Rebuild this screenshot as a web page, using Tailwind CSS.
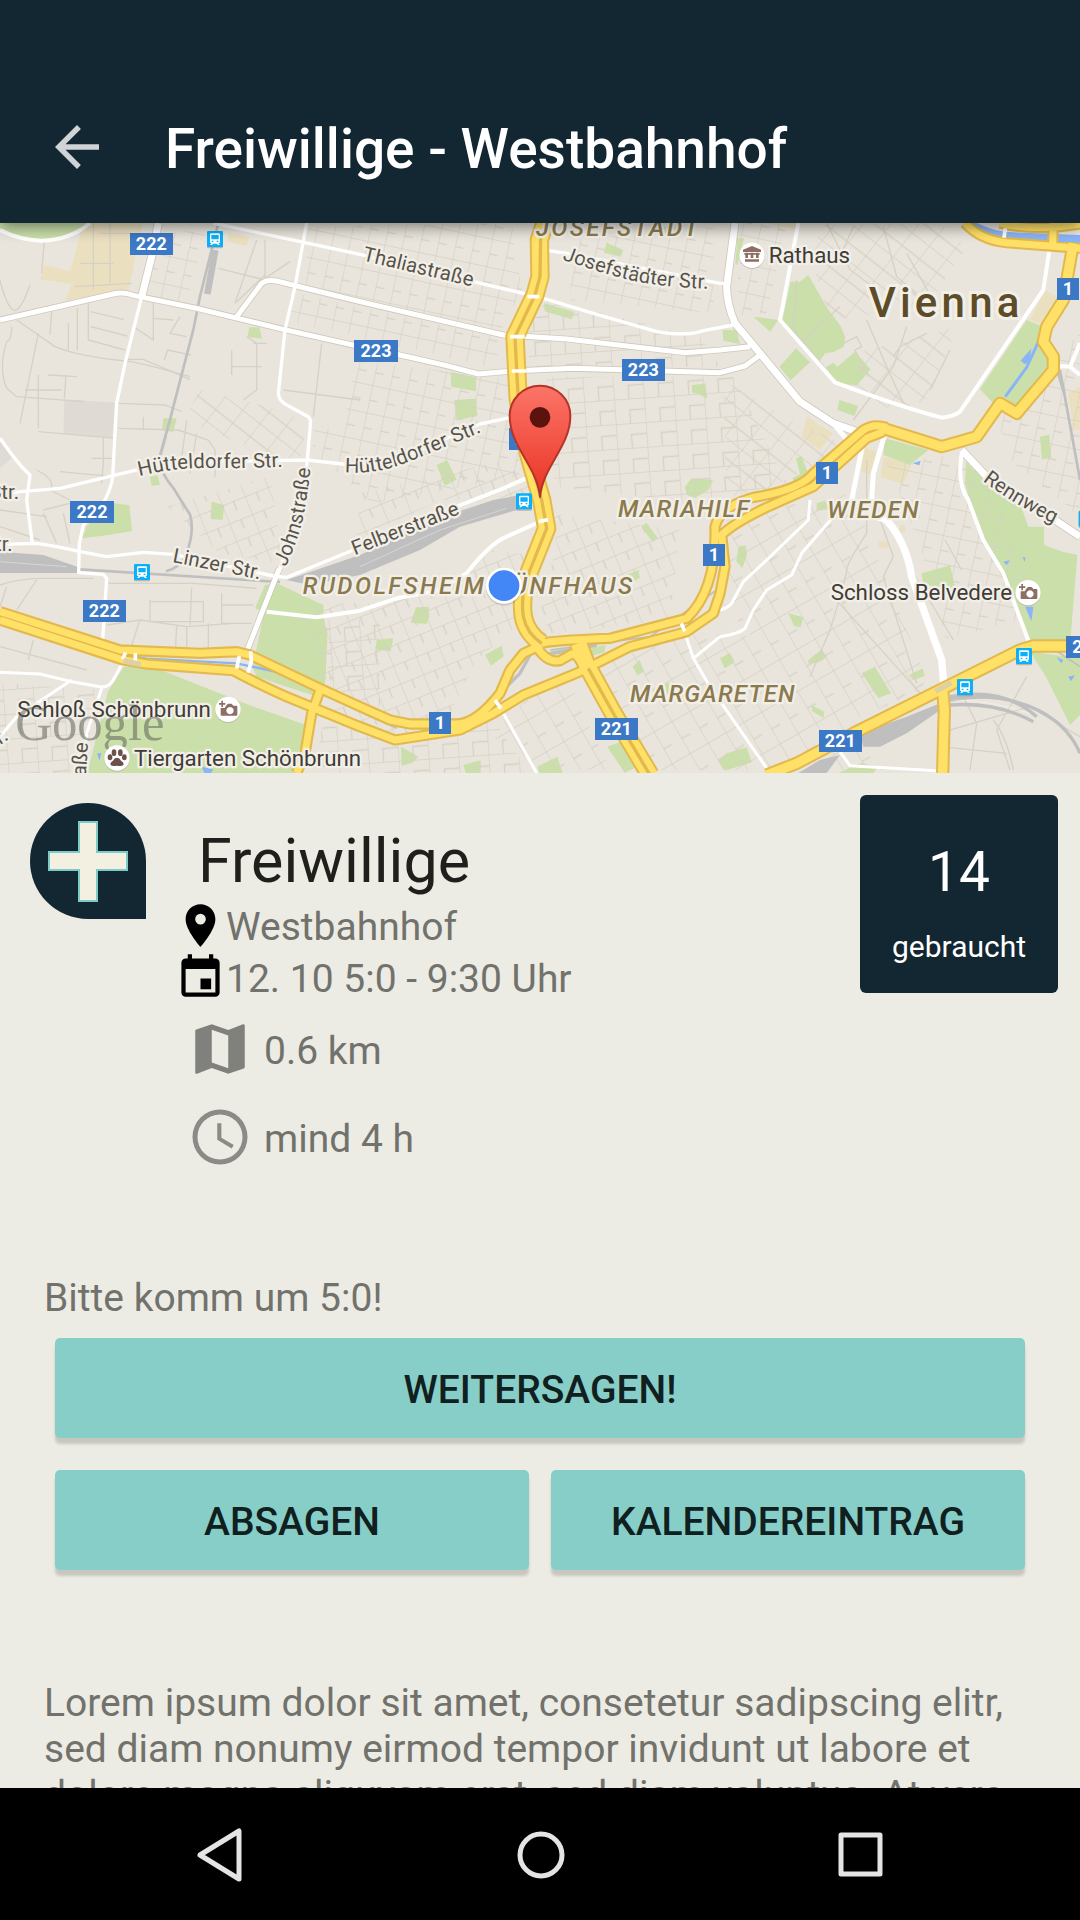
<!DOCTYPE html>
<html lang="de">
<head>
<meta charset="utf-8">
<meta name="viewport" content="width=device-width, initial-scale=1">
<title>Freiwillige - Westbahnhof</title>
<script src="https://cdn.jsdelivr.net/npm/@tailwindcss/browser@4"></script>
</head>
<body class="flex h-screen flex-col overflow-hidden bg-[#edece4] font-['Roboto',sans-serif] text-[39px] leading-[46px] text-[#72726d]">

<header class="relative z-10 flex h-[223px] shrink-0 items-center bg-[#122732] pt-[70px] shadow-[0_4px_14px_rgba(0,0,0,0.45)]">
  <button type="button" aria-label="Zurück" class="ml-[41px] flex size-[72px] items-center justify-center">
    <svg class="size-[66px]" viewBox="0 0 24 24" fill="#d0d4d6" aria-hidden="true"><path d="M20 11H7.830l5.590-5.590L12 4l-8 8 8 8 1.410-1.410L7.830 13H20v-2z"/></svg>
  </button>
  <h1 class="ml-[52px] pt-[4px] text-[55px] leading-[64px] font-medium text-white">Freiwillige - Westbahnhof</h1>
</header>

<section aria-label="Karte" class="h-[550px] shrink-0 overflow-hidden">
<svg class="block h-full w-full" viewBox="0 9 3240 1650" preserveAspectRatio="xMidYMid slice" fill="none" font-family="Roboto, sans-serif">
  <defs>
    <pattern id="gridA" width="52" height="84" patternUnits="userSpaceOnUse" patternTransform="rotate(12)"><path d="M0 0H52M0 0V84M0 46H26" stroke="#d6d1c5" stroke-width="4"/></pattern>
    <pattern id="gridB" width="74" height="58" patternUnits="userSpaceOnUse" patternTransform="rotate(-22)"><path d="M0 0H74M0 0V58M37 0V30" stroke="#d6d1c5" stroke-width="4"/></pattern>
    <pattern id="gridC" width="66" height="92" patternUnits="userSpaceOnUse" patternTransform="rotate(38)"><path d="M0 0H66M0 0V92M0 50H66" stroke="#d6d1c5" stroke-width="4"/></pattern>
    <pattern id="gridD" width="90" height="74" patternUnits="userSpaceOnUse" patternTransform="rotate(-4)"><path d="M0 0H90M0 0V74M45 74V34H90" stroke="#d6d1c5" stroke-width="4"/></pattern>
    <pattern id="gridE" width="62" height="110" patternUnits="userSpaceOnUse" patternTransform="rotate(-30)"><path d="M0 0H62M0 0V110M0 60H30" stroke="#d6d1c5" stroke-width="4"/></pattern>
    <linearGradient id="pinFill" x1="0" y1="0" x2="0" y2="1"><stop offset="0" stop-color="#fb7568"/><stop offset="1" stop-color="#ea3323"/></linearGradient>
    <symbol id="station" viewBox="0 0 48 52" overflow="visible">
      <rect y="4" width="48" height="48" rx="4" fill="#9a948a" opacity=".6"/><rect width="48" height="48" rx="4" fill="#0ab0fb"/>
      <path fill="#fff" fill-rule="evenodd" d="M13 7h22q4 0 4 4v22q0 4-5 4l5 5h-6l-4-4H19l-4 4H9l5-5q-5 0-5-4V11q0-4 4-4zM13 12v13h22V12zM14 29v4h5v-4zM29 29v4h5v-4z"/>
    </symbol>
    <symbol id="camera" viewBox="-38 -38 76 80" overflow="visible">
      <circle cy="3" r="38" fill="#b5aea4" opacity=".7"/><circle r="38" fill="#fff"/>
      <path fill="#8d6e63" fill-rule="evenodd" d="M-27-19h7v-7h5v7h7v5h-7v7h-5v-7h-7zM-6-10q3-6 7-7h10l5 6h9q3 0 3 3v24q0 3-3 3h-44q-3 0-3-3V-4h12zM6-7a11 11 0 1 0 .1 0z"/>
    </symbol>
  </defs>
  <rect width="3240" height="1659" fill="#e9e5dc"/>

  <!-- Built-up blocks -->
  <path fill="#dfdad3" d="M193 538l152 10-8 105-147-12zM0 660l45 45-45 40z"/>
  <path fill="#eadfbf" d="M250 9h178l-42 198-190 35 20-50-95-14 14-42 76 18zM685 38l62 12-8 28-56-14zM2420 590l78 50-38 50-55-40zM2588 680l42 15-18 70-28-10zM2650 712l85 20-25 60-68-20zM3135 210l55 30-45 80-55-20zM2300 9h95v20zM3205 520l35-20v130h-20zM2635 965l30 0v20l-28-3zM2700 915l14 0 2 22-18 0z"/>
  <!-- Parks -->
  <g fill="#cadfaa">
    <path d="M0 9h265q-50 48-140 50Q50 55 0 28zM748 322l30 0 8 34-44-5zM490 595l40 0-10 40-34-3zM450 770l22-4 8 28-25 3zM635 845l38 10-5 44-36-2zM340 850l48 5 8 78-70 12-80 10 15-38z"/>
    <path d="M1352 456l76 16v42l-74-14zM1362 540l66-4 4 52-62 13zM1310 735l32-14 28 58-36 18zM1632 250l92 26-10 22-80-24zM1820 68l50 22-8 20-50-12zM2076 496l40-6 6 46-26-14-20-4zM2055 800l20-25 64 5-14 30-40 24-25-10zM1990 20h45l-5 25-40-5z"/>
    <path d="M2372 185L2400 185 2425 165 2480 262 2522 318 2535 350 2532 380 2500 396 2475 400 2455 430 2345 310zM2478 442L2500 428 2512 440 2565 395 2612 448 2570 497 2505 487zM2260 290l75 10-25 35zM2338 440l50-55 42 42-58 54zM2168 330h42l10 42-50-10zM2518 540l56 18-10 30-52-18zM3080 300L3132 322 3122 370 3150 405V455L3050 558 3000 538 2985 555 2940 508zM2655 655l130 35-55 45-80-30zM3120 650l28-6 6 70-28 4zM2388 715l16-6 24 60-46 20-4-15 22-12zM2212 55h20l-20 80-6-2z"/>
    <path d="M2898 725L2970 800 3060 850 3085 920 3132 920 3132 975 3188 995 3232 1005 3210 1275 3092 1280 3070 1210 2955 960 2910 845 2895 790z"/>
    <path d="M795 1095l35-5 140 65v30l12 60-5 130-12 60-195-65-12-30 35-165-28-10z"/>
    <path d="M372 1340l80-2 290 115 170 60 8 60-18 86H262l62-245z"/>
    <path d="M1248 1162l38-2 2 30-8 22-48-4zM1130 1260l50-6-8 40-46-6zM1455 1305l50-28 6 32-38 28zM1203 1580l52 30-18 18-32 10zM1390 1635l52-14 0 38-45 0zM1612 1640l60-30 16 49h-70zM1924 920l15-12 34 45-16 12zM1875 1067l40-18 5 24-30 18zM1765 1285l52-10-4 22-50 14zM1898 1340l20-20 15 34-20 12zM1822 1580l54-20 36 80-38 18zM1988 1390l20-2 0 34-18 0zM1650 1290l80-10-50 26z"/>
    <path d="M2765 1060l85-24 16 68-62-4-35-10zM2215 980l22-4 4 30-14 38-18-20zM2365 1180l45 12-8 30-20-4zM2425 1320l40-32 15 22-20 15-35 6zM2585 1360l40-20 48 80-38 14zM2728 1365l40-20 6 22-34 14zM2160 1315l30-16 14 28-30 18zM2435 1456l36 18 0 20-34-20zM2180 1600l60-18 15 45-80 25-20-30zM2515 1659l70-30 50 12-15 18zM3090 1295l150 20v170l-30 30-75-150zM2450 850l26-8 10 26-36 4z"/>
  </g>
  <!-- Minor streets -->
  <g>
    <path fill="url(#gridA)" d="M925 20l610-11 30 200-60 120-440-90-150-30zM870 215l640 140-30 90-340-80-270-60zM470 40l150-10-60 220-120-25z"/>
    <path fill="url(#gridC)" d="M600 510l240 60 80 40-20 110-60 0-290-120zM2490 300l290-40 120-180-80-70-360 5-20 120zM2570 400l300-80-80 210-100 50-120-70zM2170 480l200 120 180 80-250 130-120 20z"/>
    <path fill="url(#gridA)" d="M1070 420l470 60 20 290-440 80-120-100zM940 620l130 10 0 110-130-20z"/>
    <path fill="url(#gridB)" d="M1080 820l440-100 90 110-290 10-250 120zM1130 1150l190-40 160-120 140 20-70 210-120 100-120 240-300-50-130-360zM500 860l310-90 40 260-190-30zM1640 880l400 50-30 270-360 40-30-60 50-210z"/>
    <path fill="url(#gridD)" d="M1640 240l460 110 60 90-560 0-40-90zM1640 470l560 0 160 320-260 60-430-50-40-150z"/>
    <path fill="url(#gridE)" d="M1710 1320l380-80 180 10 380 400H1960zM2180 890l380-70 60 160 170 420-300 130-320-380zM1460 1540l230-190 140 300H1640z"/>
    <path fill="url(#gridA)" d="M2660 730l240-30 120 200 100 280-280 80-80-280zM2220 9l140 0-60 270-90 10zM1720 60l420-40 0 260-430-40zM2990 600l250-260v550l-200-160z"/>
    <path fill="url(#gridD)" d="M1180 1560l300-60 110 159H940l30-150zM970 1200l170 0 0 260-150-60zM0 1390l300 20-60 249H0z"/>
  </g>
  <g stroke="#d6d1c5" stroke-width="4">
    <path d="M133 60l-8 100M280 9v200M330 9v180M300 40h90M240 130h100M225 200l170-10M0 180q20 80 40 90t50-75M50 300l115 80q70 30 230 45 70 15 175 45M155 275l-5 70M232 265v125M205 310v80M265 250v110l110 30M272 275l100 24M272 320l110 28M115 340L60 610M35 320q0 40-15 45-25 80 0 140l30 25 200 15M145 465l85 5M198 465l-5 70M115 465v160M75 510h110M115 635l235 20M310 650v80l-5 60M275 715h60M110 750q60 30 40 60l60 30M180 755l160 15"/>
    <path d="M460 240v120l-60-40M460 295l60 5M540 290l-30 50 50 10M380 418l50 0 140 60M493 420l10-30 70 15M355 550l140 5 50 20M355 625l180 5 90 30 20 30v80M430 590v40M500 650l-20 70M560 600l-20 150M590 640l-20 120M655 145l140 35V60M795 175l75-50M770 60l-65 190M710 245l85-80M740 350l30 20v140l-40 30M695 390v75M695 440h90M760 370h40M965 370l-25 220M850 510l230 30M0 870l140 20M130 870l80-20M0 920l120 40M130 880l40 90M190 880l20 90"/>
    <path d="M0 1095q60-20 120-20h160M20 1100l-20 60M110 1080l-60 90M320 1090h260l190 15M450 1145h160v60h-155M450 1140v65l60 0M575 1105l-5 110M665 1120v90h90M665 1155h95M320 1215l100-15 140 20 140-10M420 1200l-40 120M530 1215l-5 100M560 1220l0 90M625 1210v90M0 1280l260 70M100 1260l-15 60"/>
    <path d="M2390 180l-10 150 100 120M2520 260l-110 100M2600 300l60 140 50 110M2720 320l-40 120-120 160M2530 370l40-20 15 30-20 10 40 80M2780 340l-80 40-20 30M2850 390l-60 120M2480 9l70 140 80 60M2560 20l-40 90M2650 20l40 150 60 50M2720 100l90 160M2600 720l0 220q-60 90-60 110t-50 180l-60 140M2835 960l50 90M2700 940l40 120 120 200M2630 870l50 140-30 60 100 320M2500 1130l270 300M2870 1390l60 120-20 140M2980 1500q40 50 60 150M3080 1370l-90 160 40 120M2850 1530l240-70 150 90M2820 1580l200 20"/>
  </g>

  <!-- Water -->
  <path fill="#8ab4f8" d="M2930 9q60 28 110 28l200 8v35l-70-10-180-15q-50-12-80-46zM3072 410l22-24-6 40-14 6-12-10zM2738 730l24-8-4 14zM3010 1025l20-4-10 14zM3068 1012l8 0-2 14zM3076 1160l24 0-6 44zM3170 1312l20 8-6 10zM3205 1370l20-4-12 18zM292 1600l12 0-6 22zM604 1640l35 8-5 11h-20z"/>
  <g stroke="#8ab4f8">
    <path stroke-width="9" d="M3222 90l-10 60-15 70-75 130-42 92-64 88"/>
    <path stroke-width="7" d="M390 1308l50 8 270 14 150 32 90 40"/>
  </g>
  <!-- Railways -->
  <g stroke="#bfbfbf">
    <path stroke-width="8" d="M655 9l-55 220-20 100-70 270-32 115q0 40 42 90l50 80q15 50-12 120-16 38-60 50M240 1048l600 38M3180 450l60 330"/>
    <path stroke-width="20" d="M646 90l-24 132"/>
    <path stroke-width="10" d="M3174 455l18 60M2850 1440q130-25 240 20t150 140M2850 1455q140-10 250 50M2850 1430q160-30 260 60M1450 1470l110-110 30-55M1630 1305l160-30"/>
    <path stroke-width="5" d="M2850 1390l220-90q70-20 110 0l60 40M870 1360l310 130M1080 1475l110 50M1650 1290l300-40 200-140"/>
  </g>
  <path fill="#bfbfbf" d="M0 995l130 10 110 38-10 16-230 0zM860 1080l220-75 250-115 150-50 80-15-10 45-170 50-120 70-180 75-150 30zM2580 1540l140-50 100-40 15 10-115 80-80 40-50 0zM2460 1620l60-15-40 54h-85z"/>
  <path stroke="#fff" opacity=".35" stroke-width="3" d="M0 1025l200 15M1080 1040l240-110 200-65M2860 1440q110 0 230 40"/>

  <!-- White roads: casing, then surface -->
  <g stroke-linejoin="round">
    <g stroke="#cfc9bc">
      <path stroke-width="20" d="M0 300L340 222Q370 214 400 226L590 265 850 328 1080 380 1200 405 1340 437 1435 462 1550 452 1720 445 2160 458 2235 438 2280 405M710 290L785 190Q800 178 830 183L1080 245 1510 345 1700 357 2055 398 2160 390 2250 380M838 1045L740 1295"/>
      <path stroke-width="26" d="M475 9L455 110 425 230M2205 9L2180 200Q2180 250 2205 310L2280 400 2400 545 2500 610 2570 635M2885 690L2960 770 3150 890 3240 950"/>
    </g>
    <g stroke="#fff">
      <path stroke-width="15" d="M0 300L340 222Q370 214 400 226L590 265 850 328 1080 380 1200 405 1340 437 1435 462 1550 452 1720 445 2160 458 2235 438 2280 405M710 290L785 190Q800 178 830 183L1080 245 1510 345 1700 357 2055 398 2160 390 2250 380M838 1045L740 1295"/>
      <path stroke-width="21" d="M475 9L455 110 425 230M2205 9L2180 200Q2180 250 2205 310L2280 400 2400 545 2500 610 2570 635M2885 690L2960 770 3150 890 3240 950"/>
      <path stroke-width="10" d="M640 9L915 68 1080 103 1420 185 1620 232 1780 280 1970 335Q2060 350 2110 332L2200 315M920 9L885 200 855 330 835 520Q835 545 870 560L925 590 932 602 922 720 905 860 835 1060M425 230L375 430 350 550 338 770Q335 800 315 840L250 915 238 970 236 1058 310 1063 320 1075 308 1260M0 827L60 815 180 805 430 745 640 725 922 720 1080 738 1200 715 1440 612 1530 593M0 655Q60 740 90 765L80 840 97 970M0 973L110 970Q180 980 240 995L320 1010 430 997 520 1003 820 1068 860 1072 1060 990M1645 92L1700 100 2160 190 2180 190"/>
      <path stroke-width="12" d="M0 30Q60 60 125 62 210 60 270 9M1280 895L1420 840 1510 805 1590 770M800 1175L950 1192 1080 1172 1190 1135 1310 1112 1400 1060Q1470 970 1520 950L1620 905M2395 9L2340 300 2505 487Q2700 560 2825 593 2860 590 2880 575L3130 210 3148 90M2885 700Q2870 790 2905 840L2950 960 3010 1060 3090 1275M3170 438L3210 440 3240 370M3210 440L3240 465"/>
      <path stroke-width="9" d="M0 1357L120 1362 215 1385 300 1400Q330 1405 345 1370L375 1315M0 1550L50 1490 215 1380M305 1405L260 1540 250 1659M1485 1440L1510 1480 1610 1659M2045 1210L2080 1315 2130 1400 2310 1659M2080 1315L2160 1250M2520 1595L2550 1637 2820 1653M2430 840L2425 900 2300 1020 2230 1085 2195 1150Q2180 1165 2160 1170M2500 890L2405 1000 2375 1065 2300 1110 2260 1170 2235 1225Q2220 1240 2160 1250"/>
      <path stroke-width="15" d="M2595 640L2555 840M2655 640L2620 760 2615 840M2500 610L2550 670"/>
      <path stroke-width="22" d="M2610 880L2660 900Q2720 970 2735 1070L2825 1320 2832 1400"/>
    </g>
  </g>

  <!-- Yellow main roads -->
  <g stroke-linejoin="round">
    <g stroke="#e3b94d">
      <path stroke-width="34" d="M0 1175L360 1290 600 1300 710 1295 750 1305 960 1405 1080 1460 1170 1500 1230 1512 1370 1512Q1430 1510 1500 1420L1530 1350 1570 1300 1625 1275M0 1200L370 1320 440 1332 700 1352Q790 1400 860 1430L1080 1520 1185 1560 1380 1530 1480 1480 1570 1425 1740 1355 1890 1280 2060 1235 2140 1180 2160 1120 2175 1040 2165 945Q2200 910 2300 862L2440 800 2600 655 2650 635M1625 1270Q1650 1262 1830 1255L2060 1195Q2150 1110 2145 920 2160 860 2260 832 2400 810 2440 760L2590 630Q2620 610 2660 622M960 1410L935 1480 915 1600 890 1659M1610 1280Q1640 1330 1680 1322L1715 1302Q1735 1300 1760 1360M2895 9Q2940 60 3020 68L3240 85M3160 9L3158 75M3000 9Q3100 35 3240 12"/>
      <path stroke-width="40" d="M2640 622L2825 680 2930 650 3000 550 3050 580 3160 450V410L3130 365 3140 320 3190 240 3220 70M2300 1665L2390 1630 2560 1540 2840 1400 3060 1290 3100 1278 3240 1278M2828 1410L2833 1470 2828 1659"/>
      <path stroke-width="58" d="M1635 9L1618 60 1620 170 1605 225 1545 350 1550 450 1555 540 1585 700 1625 840 1640 925 1590 1050Q1560 1120 1570 1190 1580 1240 1625 1270M1735 1270L1760 1335 1840 1480 1950 1665"/>
    </g>
    <g stroke="#ffe168">
      <path stroke-width="21" d="M0 1175L360 1290 600 1300 710 1295 750 1305 960 1405 1080 1460 1170 1500 1230 1512 1370 1512Q1430 1510 1500 1420L1530 1350 1570 1300 1625 1275M0 1200L370 1320 440 1332 700 1352Q790 1400 860 1430L1080 1520 1185 1560 1380 1530 1480 1480 1570 1425 1740 1355 1890 1280 2060 1235 2140 1180 2160 1120 2175 1040 2165 945Q2200 910 2300 862L2440 800 2600 655 2650 635M1625 1270Q1650 1262 1830 1255L2060 1195Q2150 1110 2145 920 2160 860 2260 832 2400 810 2440 760L2590 630Q2620 610 2660 622M960 1410L935 1480 915 1600 890 1659M1610 1280Q1640 1330 1680 1322L1715 1302Q1735 1300 1760 1360M2895 9Q2940 60 3020 68L3240 85M3160 9L3158 75M3000 9Q3100 35 3240 12"/>
      <path stroke-width="28" d="M2640 622L2825 680 2930 650 3000 550 3050 580 3160 450V410L3130 365 3140 320 3190 240 3220 70M2300 1665L2390 1630 2560 1540 2840 1400 3060 1290 3100 1278 3240 1278M2828 1410L2833 1470 2828 1659"/>
      <path stroke-width="46" d="M1635 9L1618 60 1620 170 1605 225 1545 350 1550 450 1555 540 1585 700 1625 840 1640 925 1590 1050Q1560 1120 1570 1190 1580 1240 1625 1270M1735 1270L1760 1335 1840 1480 1950 1665"/>
    </g>
    <path stroke="#e3b94d" stroke-width="10" d="M1622 50L1620 170 1605 225 1545 350 1550 450 1555 540 1585 700 1625 840 1640 925 1590 1050Q1560 1120 1570 1190 1580 1240 1625 1270M1765 1345L1840 1480 1950 1665"/>
  </g>
  <!-- Bridges and crossings -->
  <path stroke="#fff" stroke-width="11" d="M3016 25l-4 28M718 1308l-8 38M752 1294l2 30-10 34M376 1298l-8 20M406 1300v22M1582 230h36M1530 350h44M1535 453h44M1485 1440l18 26M2044 1210l10 24M1616 905l28-6"/>
  <path stroke="#ddd0a4" stroke-width="16" d="M370 1322l52 12M2806 1414l48-26"/>

  <!-- Road shields -->
  <g fill="#3b78c5">
    <path d="M390 39h129v66H390zM1062 360h132v66h-132zM1866 417h129v66h-129zM210 843h132v66H210zM249 1140h129v66H249zM1785 1494h129v66h-129zM2457 1530h129v66h-129zM1527 624h130v66h-130zM3171 174h66v66h-66zM2448 726h66v66h-66zM2109 972h66v66h-66zM1287 1476h66v66h-66zM3198 1248h66v66h-66z"/>
  </g>
  <g fill="#fff" font-size="54" font-weight="700" text-anchor="middle">
    <text x="454" y="91">222</text><text x="1128" y="412">223</text><text x="1930" y="469">223</text><text x="276" y="895">222</text><text x="313" y="1192">222</text><text x="1849" y="1546">221</text><text x="2521" y="1582">221</text><text x="1592" y="676">221</text><text x="3204" y="226">1</text><text x="2481" y="778">1</text><text x="2142" y="1024">1</text><text x="1320" y="1528">1</text><text x="3232" y="1300">2</text>
  </g>
  <use href="#station" x="621" y="33" width="48" height="52"/>
  <use href="#station" x="1548" y="820" width="48" height="52"/>
  <use href="#station" x="402" y="1032" width="48" height="52"/>
  <use href="#station" x="3048" y="1284" width="48" height="52"/>
  <use href="#station" x="2871" y="1377" width="48" height="52"/>
  <use href="#station" x="3236" y="872" width="48" height="52"/>

  <!-- Street names -->
  <path id="s1" d="M1086 121L1460 210"/><path id="s2" d="M1686 118Q1860 180 1960 193T2180 208"/><path id="s3" d="M418 768Q520 742 640 744T880 738"/>
  <path id="s4" d="M1034 756Q1110 764 1200 736L1480 622"/><path id="s5" d="M856 1042Q900 950 914 870T934 720"/><path id="s6" d="M1064 1006L1400 874"/>
  <path id="s7" d="M516 1026L810 1084"/><path id="s8" d="M2948 782Q3050 860 3200 930"/>
  <g fill="#57534a" stroke="#f2efe8" stroke-width="14" stroke-linejoin="round" paint-order="stroke" font-size="61">
    <text><textPath href="#s1">Thaliastraße</textPath></text>
    <text><textPath href="#s2">Josefstädter Str.</textPath></text>
    <text><textPath href="#s3">Hütteldorfer Str.</textPath></text>
    <text><textPath href="#s4">Hütteldorfer Str.</textPath></text>
    <text><textPath href="#s5">Johnstraße</textPath></text>
    <text><textPath href="#s6">Felberstraße</textPath></text>
    <text><textPath href="#s7">Linzer Str.</textPath></text>
    <text><textPath href="#s8">Rennweg</textPath></text>
    <text x="57" y="838" text-anchor="end">Str.</text>
    <text x="38" y="994" text-anchor="end">Str.</text>
    <text text-anchor="end" transform="translate(28 1556) rotate(-35)">Str.</text>
    <text text-anchor="end" transform="translate(264 1568) rotate(-86)">straße</text>
  </g>
  <!-- Districts -->
  <g fill="#8b7a4d" stroke="#f2efe8" stroke-width="14" stroke-linejoin="round" paint-order="stroke" font-size="72" font-style="italic" font-weight="500" class="tracking-wider">
    <text x="1608" y="47" class="tracking-widest">JOSEFSTADT</text>
    <text x="1854" y="890">MARIAHILF</text>
    <text x="2482" y="893">WIEDEN</text>
    <text x="908" y="1123" class="tracking-widest">RUDOLFSHEIM-FÜNFHAUS</text>
    <text x="1890" y="1445">MARGARETEN</text>
  </g>
  <text x="2606" y="290" fill="#5d4c27" stroke="#f2efe8" stroke-width="18" paint-order="stroke" font-size="126" font-weight="500" class="tracking-widest">Vienna</text>
  <!-- Points of interest -->
  <g fill="#3f3c36" stroke="#f2efe8" stroke-width="14" stroke-linejoin="round" paint-order="stroke" font-size="67">
    <text x="2306" y="128">Rathaus</text>
    <text x="2492" y="1140">Schloss Belvedere</text>
    <text x="52" y="1491">Schloß Schönbrunn</text>
    <text x="402" y="1638">Tiergarten Schönbrunn</text>
  </g>
  <text x="46" y="1560" fill="#55584e" fill-opacity=".5" font-family="Liberation Serif, serif" font-size="152">Google</text>
  <use href="#camera" x="3046" y="1080" width="76" height="80"/>
  <use href="#camera" x="646" y="1430" width="76" height="80"/>
  <circle cx="2256" cy="109" r="38" fill="#b5aea4" opacity=".7"/><circle cx="2256" cy="106" r="38" fill="#fff"/>
  <path fill="#8d6e63" d="M2256 78l27 11v7h-54v-7zM2236 98h8v16h-8zM2252 98h8v16h-8zM2268 98h8v16h-8zM2233 99h46v5h-46zM2235 118h42v7h-42z"/>
  <circle cx="351" cy="1617" r="38" fill="#b5aea4" opacity=".7"/><circle cx="351" cy="1614" r="38" fill="#fff"/>
  <g fill="#6d5049"><ellipse cx="330" cy="1612" rx="7" ry="9"/><ellipse cx="342" cy="1598" rx="7" ry="10"/><ellipse cx="361" cy="1598" rx="7" ry="10"/><ellipse cx="373" cy="1612" rx="7" ry="9"/><path d="M351 1613q8 0 12 9 10 6 7 13-4 5-19 2-15 3-19-2-3-7 7-13 4-9 12-9z"/></g>
  <!-- Own position and destination -->
  <circle cx="1512" cy="1102" r="55" fill="#000" opacity=".12"/>
  <circle cx="1512" cy="1097" r="50" fill="#4386f5" stroke="#fff" stroke-width="8"/>
  <path d="M1620 831C1612 740 1529 680 1529 588A91 91 0 0 1 1711 588C1711 680 1628 740 1620 831Z" fill="url(#pinFill)" stroke="#b43528" stroke-width="6" stroke-linejoin="round"/>
  <circle cx="1620" cy="592" r="31" fill="#5b130e"/>
</svg>
</section>

<main class="flex min-h-0 flex-1 flex-col overflow-hidden">
  <section class="flex items-start pt-[22px] pr-[22px] pl-[30px]">
    <svg class="mt-[8px] size-[116px] shrink-0" viewBox="0 0 116 116" aria-hidden="true">
      <path fill="#122732" d="M58 0A58 58 0 0 1 116 58V116H58A58 58 0 0 1 58 0z"/>
      <path fill="#f3f0e1" stroke="#7ccbc7" stroke-width="2" d="M49 19h18v30h30v18H67v31H49V67H19V49h30z"/>
    </svg>
    <div class="ml-[29px] flex-1">
      <h2 class="mt-[31px] mb-[3px] ml-[23px] text-[61px] leading-[70px] text-[#1f1f1c]">Freiwillige</h2>
      <p class="flex h-[52px] items-center">
        <svg class="size-[51px]" viewBox="0 0 24 24" fill="#000" aria-hidden="true"><path fill-rule="evenodd" d="M12 2C8.130 2 5 5.130 5 9c0 5.250 7 13 7 13s7-7.750 7-13c0-3.870-3.130-7-7-7zm0 9.500a2.500 2.500 0 1 1 0-5 2.500 2.500 0 0 1 0 5z"/></svg>
        <span class="pt-[4px]">Westbahnhof</span>
      </p>
      <p class="flex h-[52px] items-center">
        <svg class="size-[51px]" viewBox="0 0 24 24" fill="#000" aria-hidden="true"><path fill-rule="evenodd" d="M17 12.500h-5v5h5v-5zM16 1v2H8V1H6v2H5c-1.110 0-1.990.9-1.990 2L3 19c0 1.100.890 2 2 2h14c1.100 0 2-.9 2-2V5c0-1.100-.9-2-2-2h-1V1h-2zm3 18H5V8h14v11z"/></svg>
        <span class="pt-[4px]">12. 10 5:0 - 9:30 Uhr</span>
      </p>
      <p class="mt-[13px] ml-[12px] flex h-[66px] items-center gap-[11px]">
        <svg class="size-[66px]" viewBox="0 0 24 24" fill="#80807c" aria-hidden="true"><path fill-rule="evenodd" d="M20.500 3l-.160.030L15 5.100 9 3 3.360 4.900c-.210.070-.360.250-.360.480V20.500c0 .280.220.500.500.500l.160-.030L9 18.900l6 2.100 5.640-1.900c.210-.070.360-.250.360-.480V3.500c0-.280-.220-.500-.500-.500zM15 19l-6-2.110V5l6 2.110V19z"/></svg>
        <span class="pt-[4px]">0.6 km</span>
      </p>
      <p class="mt-[22px] ml-[12px] flex h-[66px] items-center gap-[11px]">
        <svg class="size-[66px]" viewBox="0 0 24 24" fill="#8a8a86" aria-hidden="true"><path fill-rule="evenodd" d="M12 2a10 10 0 1 0 0 20 10 10 0 0 0 0-20zm0 18.200a8.200 8.200 0 1 1 0-16.400 8.200 8.200 0 0 1 0 16.400zM12.500 7H11v6l5.250 3.150.75-1.230-4.500-2.670z"/></svg>
        <span class="pt-[4px]">mind 4 h</span>
      </p>
    </div>
    <div class="flex size-[198px] shrink-0 flex-col items-center gap-[25px] rounded-[6px] bg-[#122732] pt-[45px] text-white">
      <span class="text-[55px] leading-[64px]">14</span>
      <span class="text-[30px] leading-[36px]">gebraucht</span>
    </div>
  </section>

  <section class="mt-[105px] px-[44px]">
    <p>Bitte komm um 5:0!</p>
    <div class="mt-[17px] mr-[11px] ml-[11px] grid grid-cols-2 gap-x-[22px] gap-y-[32px] text-[#10201f]">
      <button type="button" class="col-span-2 h-[100px] rounded-[5px] bg-[#88cec8] pt-[4px] font-medium shadow-[0_6px_3px_rgba(0,0,0,0.16)]">WEITERSAGEN!</button>
      <button type="button" class="h-[100px] rounded-[5px] bg-[#88cec8] pt-[4px] font-medium shadow-[0_6px_3px_rgba(0,0,0,0.16)]">ABSAGEN</button>
      <button type="button" class="h-[100px] rounded-[5px] bg-[#88cec8] pt-[4px] font-medium shadow-[0_6px_3px_rgba(0,0,0,0.16)]">KALENDEREINTRAG</button>
    </div>
    <p class="mt-[110px]">Lorem ipsum dolor sit amet, consetetur sadipscing elitr, sed diam nonumy eirmod tempor invidunt ut labore et dolore magna aliquyam erat, sed diam voluptua. At vero</p>
  </section>
</main>

<nav aria-label="Systemnavigation" class="grid h-[132px] shrink-0 grid-cols-3 items-center justify-items-center bg-black px-[60px]">
  <button type="button" aria-label="Zurück"><svg class="size-[72px]" viewBox="0 0 72 72" fill="none" stroke="#e4e4e4" stroke-width="5" stroke-linejoin="round"><path d="M16 37L55 13v48z"/></svg></button>
  <button type="button" aria-label="Startseite"><svg class="size-[72px]" viewBox="0 0 72 72" fill="none" stroke="#e4e4e4" stroke-width="5"><circle cx="37" cy="37" r="21"/></svg></button>
  <button type="button" aria-label="Letzte Apps"><svg class="size-[72px]" viewBox="0 0 72 72" fill="none" stroke="#e4e4e4" stroke-width="5" stroke-linejoin="round"><path d="M17 17h39v39H17z"/></svg></button>
</nav>
</body>
</html>
